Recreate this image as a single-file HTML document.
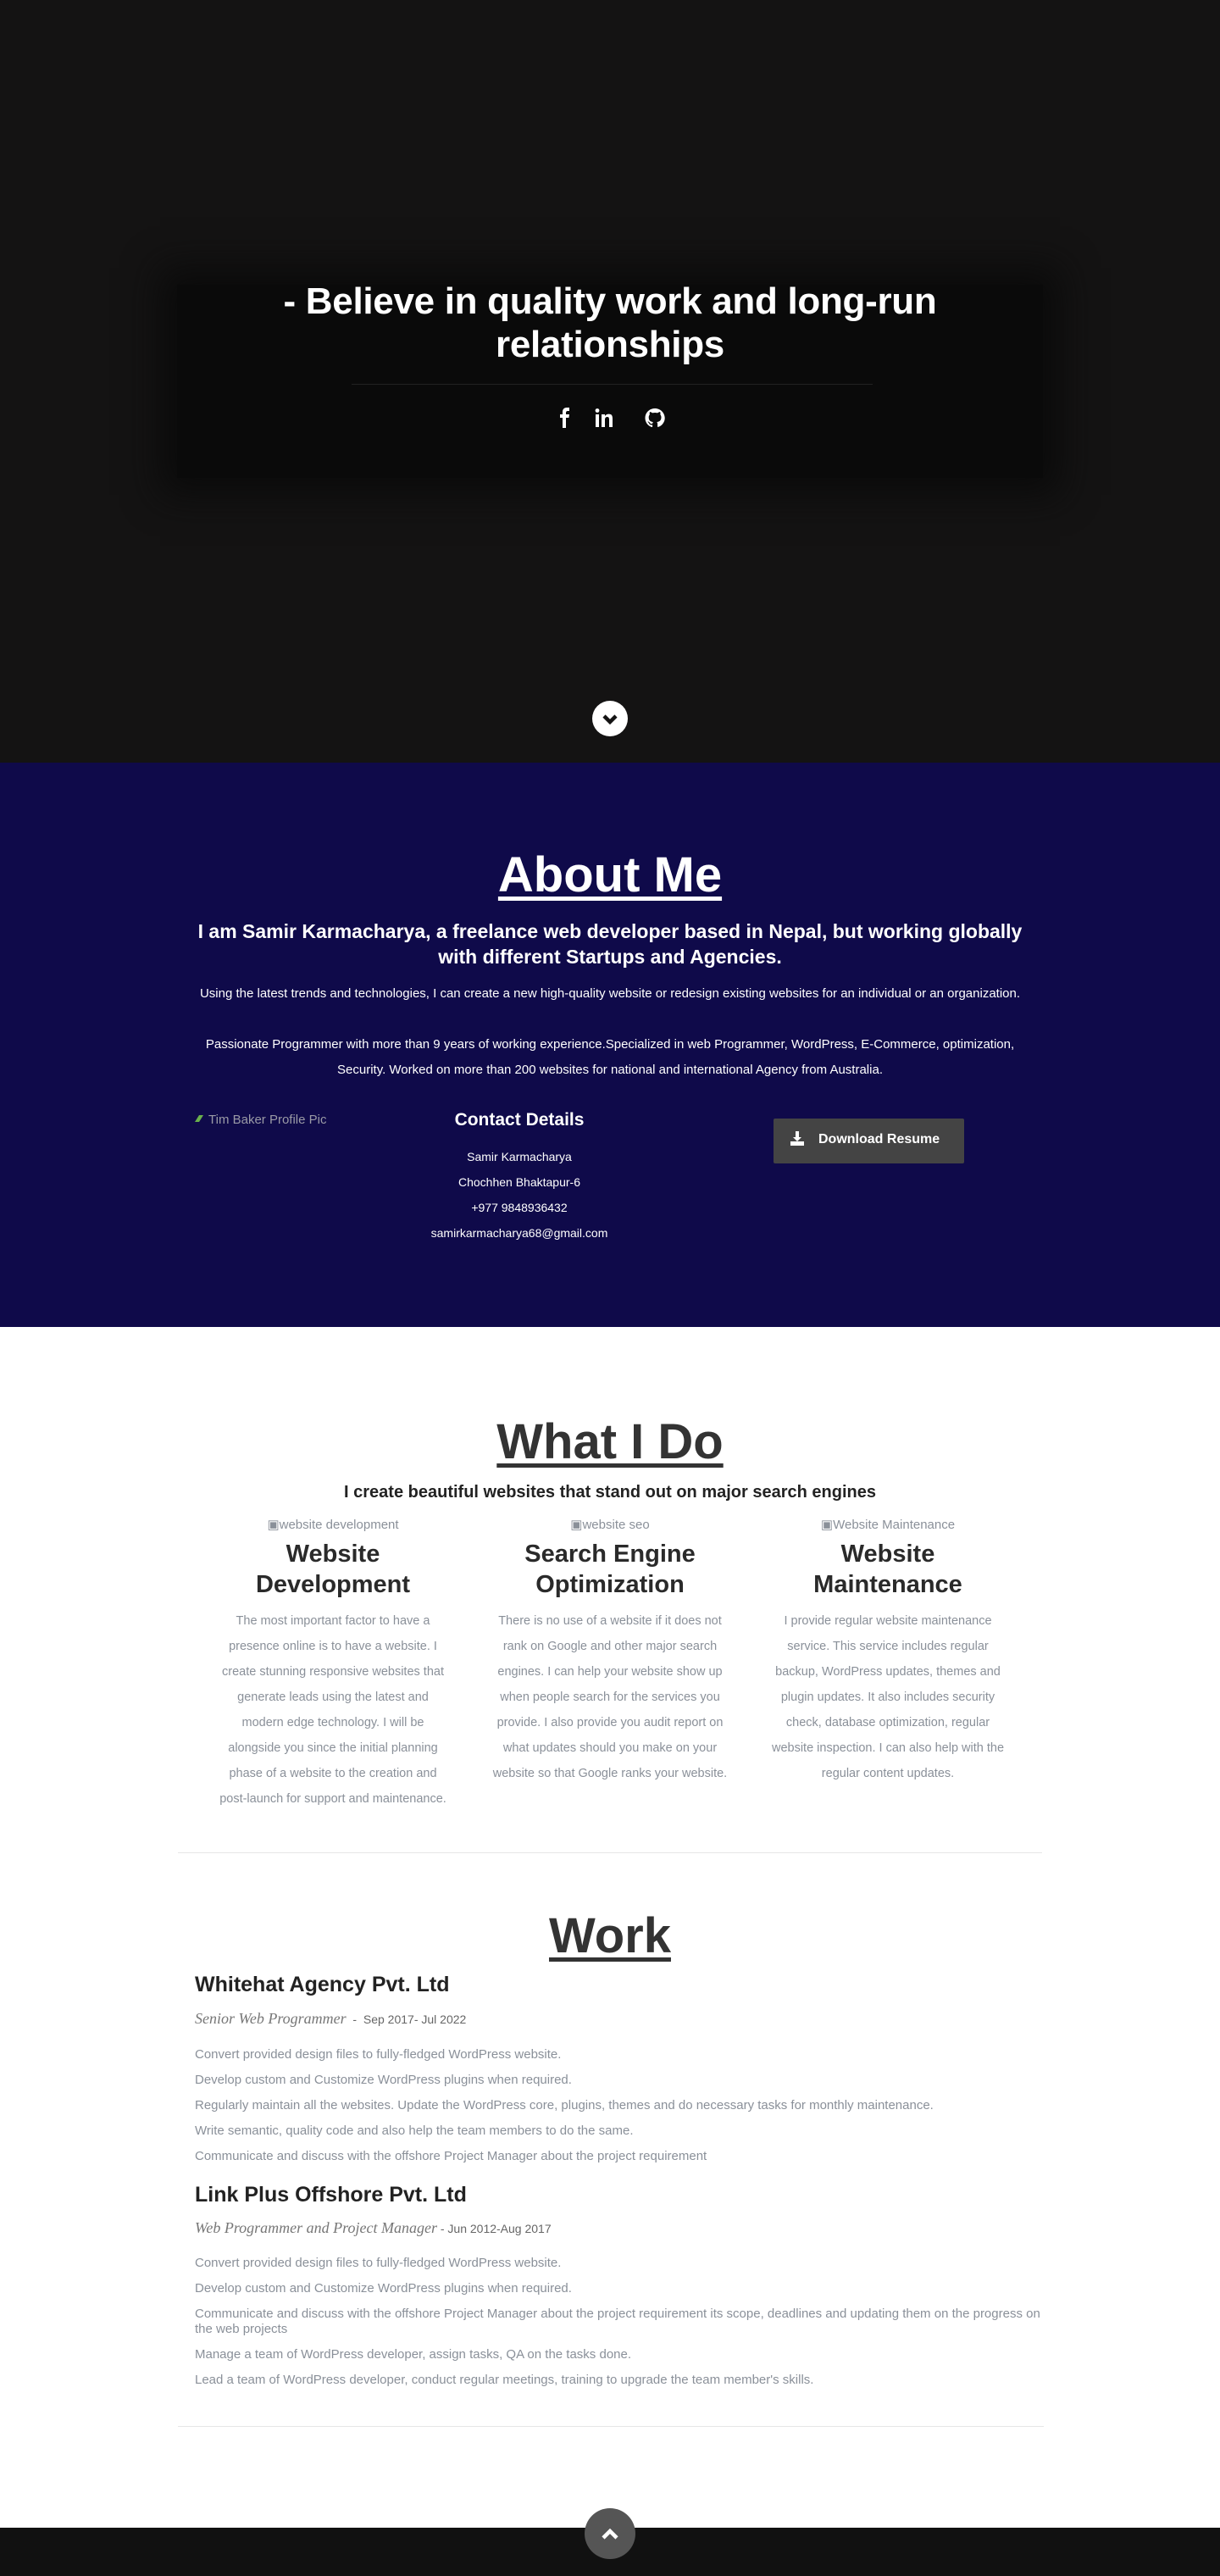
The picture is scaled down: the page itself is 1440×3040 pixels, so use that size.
<!DOCTYPE html>
<html><head><meta charset="utf-8">
<style>
*{margin:0;padding:0;box-sizing:border-box}
html,body{width:1440px;height:3040px;overflow:hidden}
body{position:relative;font-family:"Liberation Sans",sans-serif;background:#fff}
.a{position:absolute}
.c{text-align:center}
#hero{left:0;top:0;width:1440px;height:900px;background:#141313}
#box{left:209px;top:336px;width:1022px;height:228px;background:#0a0a0a;box-shadow:0 0 40px 20px #0b0b0b}
#about{left:0;top:900px;width:1440px;height:666px;background:#0f0a4a}
.t{white-space:nowrap}
.gp{color:#8a9099;font-size:15px}
.cp{color:#8a9099;font-size:14.5px;line-height:30px;margin-top:10px;padding:0 10px}
</style></head><body>
<div id="hero" class="a"></div>
<div id="box" class="a"></div>
<div class="a c t" style="left:0;width:1440px;top:330px;color:#fff;font-weight:bold;font-size:44px;line-height:51px;letter-spacing:-0.3px">- Believe in quality work and long-run<br>relationships</div>
<div class="a" style="left:415px;top:453px;width:615px;height:1px;background:#222"></div>
<svg class="a" style="left:650px;top:478px" width="140" height="30" viewBox="0 0 140 30">
<path d="M14 27V15h-3v-4h3V8c0-3 2-5 5-5h3v4h-2c-1 0-2 .5-2 2v2h4l-.6 4H18v12z" fill="#fff"/>
<rect x="53" y="11" width="4" height="15" fill="#fff"/><circle cx="55" cy="6.5" r="2.4" fill="#fff"/>
<path d="M60 11h4v2c1-1.5 2.5-2.4 4.6-2.4 3.4 0 4.4 2 4.4 5.4V26h-4v-9c0-2-.6-3-2.2-3-2 0-2.8 1.4-2.8 3.4V26h-4z" fill="#fff"/>
<path d="M123 4c-6.4 0-11.5 5-11.5 11.3 0 5 3.3 9.2 7.8 10.7.6.1.8-.2.8-.6v-2.1c-3.2.7-3.9-1.4-3.9-1.4-.5-1.3-1.3-1.7-1.3-1.7-1-.7.1-.7.1-.7 1.2.1 1.8 1.2 1.8 1.2 1 1.8 2.7 1.3 3.4 1 .1-.8.4-1.3.7-1.6-2.6-.3-5.2-1.3-5.2-5.7 0-1.3.5-2.3 1.2-3.1-.1-.3-.5-1.5.1-3.1 0 0 1-.3 3.2 1.2a11 11 0 0 1 5.8 0c2.2-1.5 3.2-1.2 3.2-1.2.6 1.6.2 2.8.1 3.1.7.8 1.2 1.9 1.2 3.1 0 4.4-2.7 5.4-5.2 5.7.4.4.8 1 .8 2.1v3.1c0 .4.2.7.8.6 4.5-1.5 7.8-5.7 7.8-10.7C134.5 9 129.4 4 123 4z" fill="#fff"/>
</svg>
<div class="a" style="left:699px;top:827px;width:42px;height:42px;border-radius:50%;background:#fff"></div>
<svg class="a" style="left:699px;top:827px" width="42" height="42"><path d="M14 18l7 7 7-7" stroke="#141313" stroke-width="4.5" fill="none"/></svg>

<div id="about" class="a"></div>
<div class="a c t" style="left:0;width:1440px;top:998px;color:#fff;font-weight:bold;font-size:58px;line-height:70px"><span style="text-decoration:underline;text-decoration-thickness:5px;text-underline-offset:6px">About Me</span></div>
<div class="a c t" style="left:0;width:1440px;top:1084px;color:#fff;font-weight:bold;font-size:23px;line-height:30px">I am Samir Karmacharya, a freelance web developer based in Nepal, but working globally<br>with different Startups and Agencies.</div>
<div class="a c t" style="left:0;width:1440px;top:1164px;color:#fff;font-size:15px">Using the latest trends and technologies, I can create a new high-quality website or redesign existing websites for an individual or an organization.</div>
<div class="a c" style="left:220px;width:1000px;top:1218px;color:#fff;font-size:15px;line-height:30px">Passionate Programmer with more than 9 years of working experience.Specialized in web Programmer, WordPress, E-Commerce, optimization, Security. Worked on more than 200 websites for national and international Agency from Australia.</div>
<svg class="a" style="left:229px;top:1313px" width="12" height="12"><path d="M1 11L6 3l5 0-5 8z" fill="#6ab04c"/></svg>
<div class="a t" style="left:246px;top:1313px;color:#9a9aa6;font-size:15px">Tim Baker Profile Pic</div>
<div class="a c t" style="left:413px;width:400px;top:1310px;color:#fff;font-weight:bold;font-size:21px">Contact Details</div>
<div class="a c" style="left:413px;width:400px;top:1350px;color:#fff;font-size:14px;line-height:30px">Samir Karmacharya<br>Chochhen Bhaktapur-6<br>+977 9848936432<br>samirkarmacharya68@gmail.com</div>
<div class="a" style="left:913px;top:1320px;width:225px;height:53px;background:#444;border-radius:2px"></div>
<svg class="a" style="left:932px;top:1334px" width="18" height="20"><path d="M7 1h4v7h3l-5 5-5-5h3z" fill="#fff"/><rect x="1" y="13" width="16" height="5" fill="#fff"/></svg>
<div class="a t" style="left:966px;top:1336px;color:#fff;font-weight:bold;font-size:16px">Download Resume</div>

<div class="a c t" style="left:0;width:1440px;top:1667px;color:#333;font-weight:bold;font-size:58px;line-height:70px"><span style="text-decoration:underline;text-decoration-thickness:5px;text-underline-offset:6px">What I Do</span></div>
<div class="a c t" style="left:0;width:1440px;top:1750px;color:#222;font-weight:bold;font-size:20px">I create beautiful websites that stand out on major search engines</div>

<div class="a c" style="left:243px;width:300px;top:1790px">
<div class="gp" style="height:26px">&#9635;website development</div>
<div style="font-weight:bold;font-size:29px;line-height:36px;color:#2a2a2a">Website<br>Development</div>
<div class="cp" style="padding:0 14px">The most important factor to have a presence online is to have a website. I create stunning responsive websites that generate leads using the latest and modern edge technology. I will be alongside you since the initial planning phase of a website to the creation and post-launch for support and maintenance.</div></div>
<div class="a c" style="left:570px;width:300px;top:1790px">
<div class="gp" style="height:26px">&#9635;website seo</div>
<div style="font-weight:bold;font-size:29px;line-height:36px;color:#2a2a2a">Search Engine<br>Optimization</div>
<div class="cp">There is no use of a website if it does not rank on Google and other major search engines. I can help your website show up when people search for the services you provide. I also provide you audit report on what updates should you make on your website so that Google ranks your website.</div></div>
<div class="a c" style="left:898px;width:300px;top:1790px">
<div class="gp" style="height:26px">&#9635;Website Maintenance</div>
<div style="font-weight:bold;font-size:29px;line-height:36px;color:#2a2a2a">Website<br>Maintenance</div>
<div class="cp">I provide regular website maintenance service. This service includes regular backup, WordPress updates, themes and plugin updates. It also includes security check, database optimization, regular website inspection. I can also help with the regular content updates.</div></div>

<div class="a" style="left:210px;top:2186px;width:1020px;height:1px;background:#e6e6e6"></div>
<div class="a c t" style="left:0;width:1440px;top:2250px;color:#333;font-weight:bold;font-size:58px;line-height:70px"><span style="text-decoration:underline;text-decoration-thickness:5px;text-underline-offset:6px">Work</span></div>

<div class="a t" style="left:230px;top:2328px;color:#222;font-weight:bold;font-size:25px">Whitehat Agency Pvt. Ltd</div>
<div class="a t" style="left:230px;top:2372px;color:#666;font-size:14px"><i style="font-family:'Liberation Serif',serif;font-size:18px;color:#777">Senior Web Programmer</i> &nbsp;- &nbsp;Sep 2017- Jul 2022</div>
<div class="a gp" style="left:230px;top:2410px;line-height:30px">Convert provided design files to fully-fledged WordPress website.<br>Develop custom and Customize WordPress plugins when required.<br>Regularly maintain all the websites. Update the WordPress core, plugins, themes and do necessary tasks for monthly maintenance.<br>Write semantic, quality code and also help the team members to do the same.<br>Communicate and discuss with the offshore Project Manager about the project requirement</div>

<div class="a t" style="left:230px;top:2576px;color:#222;font-weight:bold;font-size:25px">Link Plus Offshore Pvt. Ltd</div>
<div class="a t" style="left:230px;top:2619px;color:#666;font-size:14px"><i style="font-family:'Liberation Serif',serif;font-size:18px;color:#777">Web Programmer and Project Manager</i> - Jun 2012-Aug 2017</div>
<div class="a gp" style="left:230px;width:1000px;top:2656px;line-height:30px">Convert provided design files to fully-fledged WordPress website.<br>Develop custom and Customize WordPress plugins when required.<br><div style="line-height:18px;padding:6px 0">Communicate and discuss with the offshore Project Manager about the project requirement its scope, deadlines and updating them on the progress on the web projects</div>Manage a team of WordPress developer, assign tasks, QA on the tasks done.<br>Lead a team of WordPress developer, conduct regular meetings, training to upgrade the team member's skills.</div>

<div class="a" style="left:210px;top:2863px;width:1022px;height:1px;background:#e6e6e6"></div>
<div class="a" style="left:0;top:2983px;width:1440px;height:57px;background:#111"></div>
<div class="a" style="left:690px;top:2960px;width:60px;height:60px;border-radius:50%;background:#555"></div>
<svg class="a" style="left:690px;top:2960px" width="60" height="60"><path d="M22 35l8-8 8 8" stroke="#fff" stroke-width="4.5" fill="none"/></svg>
</body></html>
